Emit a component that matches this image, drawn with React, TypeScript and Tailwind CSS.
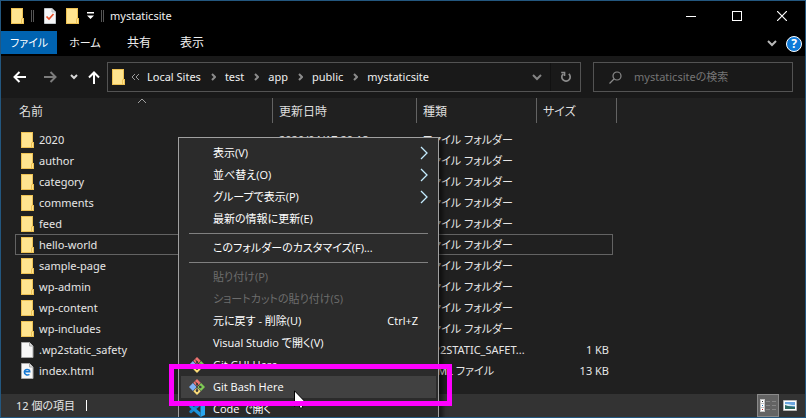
import type { ReactNode } from 'react';

type Kind = 'folder' | 'file' | 'html';

interface Entry {
  name: string;
  kind: Kind;
  type: string;
  size?: string;
  date?: string;
  focused?: boolean;
}

const FOLDER = 'ファイル フォルダー';

const entries: Entry[] = [
  { name: '2020', kind: 'folder', type: FOLDER, date: '2020/04/17 20:18' },
  { name: 'author', kind: 'folder', type: FOLDER },
  { name: 'category', kind: 'folder', type: FOLDER },
  { name: 'comments', kind: 'folder', type: FOLDER },
  { name: 'feed', kind: 'folder', type: FOLDER },
  { name: 'hello-world', kind: 'folder', type: FOLDER, focused: true },
  { name: 'sample-page', kind: 'folder', type: FOLDER },
  { name: 'wp-admin', kind: 'folder', type: FOLDER },
  { name: 'wp-content', kind: 'folder', type: FOLDER },
  { name: 'wp-includes', kind: 'folder', type: FOLDER },
  { name: '.wp2static_safety', kind: 'file', type: 'WP2STATIC_SAFET...', size: '1 KB' },
  { name: 'index.html', kind: 'html', type: 'HTML ファイル', size: '13 KB' },
];

function FolderIcon() {
  return (
    <svg width="13" height="16" viewBox="0 0 13 16" className="shrink-0" aria-hidden="true">
      <path d="M0 0h12v10h1v6H0z" fill="#eec254" />
      <path d="M1 1h10v9.500h-1V15H1z" fill="#ffe48f" />
      <path d="M11 11h1v4h-1z" fill="#ffe48f" />
    </svg>
  );
}

function FileIcon({ kind }: { kind: Kind }) {
  if (kind === 'folder') return <FolderIcon />;
  return (
    <svg width="13" height="16" viewBox="0 0 13 16" className="shrink-0" aria-hidden="true">
      <path d="M.5.5h8l3.500 3.500v11.500H.5z" fill="#f7f7f7" stroke="#a9a9a9" />
      <path d="M8.500.5v3.500H12" fill="#ddd" stroke="#a9a9a9" />
      {kind === 'html' && (
        <path d="M3.800 8.800h4.900c0-3.300-5.200-3.100-5.300.3-.1 3 3.200 3.500 5 2.300" fill="none" stroke="#1679d3" strokeWidth="1.600" />
      )}
    </svg>
  );
}

function CheckPageIcon() {
  return (
    <svg width="12" height="16" viewBox="0 0 12 16" aria-hidden="true">
      <path d="M.5.5h7.500l3.500 3.500v11.500H.5z" fill="#f4f6f8" stroke="#c3c8cc" />
      <path d="M8 .5v3.500h3.500" fill="#dfe3e6" stroke="#b9bfc4" />
      <path d="M2.500 8.500 5 11l4.500-5" fill="none" stroke="#e8502a" strokeWidth="1.700" />
    </svg>
  );
}

function GitIcon() {
  return (
    <svg width="16" height="16" viewBox="0 0 16 16" aria-hidden="true">
      <path d="M8 0l3.700 3.700L8 7.400 4.300 3.700z" fill="#ee7370" />
      <path d="M3.900 4.100 7.600 8 3.900 11.900 0 8z" fill="#7fb2f5" />
      <path d="M12.100 4.100 16 8l-3.900 3.900L8.300 8z" fill="#7fca55" />
      <path d="M8 8.600l3.700 3.700L8 16l-3.700-3.700z" fill="#fbdc78" />
      <path d="M6.200 2.500 8 4.500v8M8 5l3.500 3.200" fill="none" stroke="#3a3a3a" strokeWidth="1" />
      <circle cx="8" cy="5" r="1.100" fill="#3a3a3a" />
      <circle cx="8" cy="11.600" r="1.300" fill="#3a3a3a" />
      <circle cx="11.300" cy="8" r="1.300" fill="#3a3a3a" />
    </svg>
  );
}

function CodeIcon() {
  return (
    <svg width="16" height="16" viewBox="0 0 16 16" aria-hidden="true">
      <path d="M11.500 0 16 2v12l-4.500 2z" fill="#2aa6ee" />
      <path d="M11.500 0v4.500L2 12.500.3 11.200v-1.200z" fill="#1487cf" />
      <path d="M11.500 16v-4.500L2 3.500.3 4.800V6z" fill="#1a93dc" />
    </svg>
  );
}

function Chevron({ className, d, w = 10, h = 10, stroke = 2 }: { className: string; d: string; w?: number; h?: number; stroke?: number }) {
  return (
    <svg width={w} height={h} viewBox={`0 0 ${w} ${h}`} className={className} fill="none" stroke="currentColor" strokeWidth={stroke} aria-hidden="true">
      <path d={d} />
    </svg>
  );
}

function MenuItem({ label, icon, keys, sub, disabled, active }: { label: string; icon?: ReactNode; keys?: string; sub?: boolean; disabled?: boolean; active?: boolean }) {
  return (
    <button
      type="button"
      role="menuitem"
      disabled={disabled}
      className={`mx-[2px] flex h-[22px] shrink-0 items-center pr-2 pl-2 text-left ${active ? 'bg-[#414141]' : ''} ${disabled ? 'text-[#6d6d6d]' : 'text-white'}`}
    >
      <span className="flex w-6 shrink-0">{icon}</span>
      <span className="flex-1 whitespace-nowrap">{label}</span>
      {keys && <span className="pr-[10px]">{keys}</span>}
      {sub && <Chevron className="text-[#c4ecff]" d="M1 1l6 6-6 6" w={8} h={14} stroke={1.3} />}
    </button>
  );
}

function Separator() {
  return (
    <div role="separator" className="flex h-[7px] shrink-0 items-center px-[10px]">
      <div className="h-px flex-1 bg-[#808080]" />
    </div>
  );
}

function ContextMenu() {
  return (
    <div role="menu" className="absolute top-[137px] left-[178px] flex w-[261px] flex-col border border-[#a0a0a0] bg-[#2b2b2b] pt-1 pb-1 font-['Open_Sans','Noto_Sans_CJK_JP',sans-serif] shadow-[4px_4px_4px_rgba(0,0,0,0.5)]">
      <MenuItem label="表示(V)" sub />
      <MenuItem label="並べ替え(O)" sub />
      <MenuItem label="グループで表示(P)" sub />
      <MenuItem label="最新の情報に更新(E)" />
      <Separator />
      <MenuItem label="このフォルダーのカスタマイズ(F)..." />
      <Separator />
      <MenuItem label="貼り付け(P)" disabled />
      <MenuItem label="ショートカットの貼り付け(S)" disabled />
      <MenuItem label="元に戻す - 削除(U)" keys="Ctrl+Z" />
      <MenuItem label="Visual Studio で開く(V)" />
      <MenuItem label="Git GUI Here" icon={<GitIcon />} />
      <MenuItem label="Git Bash Here" icon={<GitIcon />} active />
      <MenuItem label="Code で開く" icon={<CodeIcon />} />
    </div>
  );
}

function TitleBar() {
  return (
    <header className="flex h-[30px] shrink-0 items-center bg-black pl-[10px]">
      <FolderIcon />
      <span className="ml-[7px] h-3 w-[3px] border-x border-[#555]" />
      <button type="button" aria-label="プロパティ" className="ml-[10px]"><CheckPageIcon /></button>
      <button type="button" aria-label="新しいフォルダー" className="ml-[10px]"><FolderIcon /></button>
      <button type="button" aria-label="カスタマイズ" className="ml-2">
        <svg width="7" height="8" viewBox="0 0 7 8" aria-hidden="true">
          <path d="M0 0h7v1.500H0zM0 3.500h7L3.500 7z" fill="#fff" />
        </svg>
      </button>
      <span className="ml-[7px] h-3 w-[3px] border-x border-[#555]" />
      <h1 className="ml-[6px] flex-1 text-[#f0f0f0]">mystaticsite</h1>
      <button type="button" aria-label="最小化" className="flex w-[46px] justify-center">
        <span className="h-px w-[10px] bg-white" />
      </button>
      <button type="button" aria-label="最大化" className="flex w-[45px] justify-center">
        <span className="size-[10px] border border-white" />
      </button>
      <button type="button" aria-label="閉じる" className="flex w-[46px] justify-center">
        <svg width="10" height="10" viewBox="0 0 10 10" stroke="#fff" strokeWidth="1.200" aria-hidden="true">
          <path d="M0 0l10 10M10 0L0 10" />
        </svg>
      </button>
    </header>
  );
}

function Ribbon() {
  return (
    <nav className="flex h-[25px] shrink-0 items-start bg-black text-[12px]">
      <button type="button" className="h-[23px] w-14 bg-[#0063b1] text-[11px] text-white">ファイル</button>
      <button type="button" className="h-[23px] w-14 text-[11px] text-[#f0f0f0]">ホーム</button>
      <button type="button" className="h-[23px] w-[52px] text-[#f0f0f0]">共有</button>
      <button type="button" className="h-[23px] w-[54px] text-[#f0f0f0]">表示</button>
      <span className="flex-1" />
      <button type="button" aria-label="リボンの展開" className="flex h-6 w-5 items-center justify-center">
        <Chevron className="text-[#b8b8b8]" d="M1 1l4 4 4-4" h={7} />
      </button>
      <button type="button" aria-label="ヘルプ" className="mr-[3px] ml-1 flex size-4 items-center justify-center self-center rounded-full border border-white bg-[#0f7ad8] leading-none font-bold text-white">
        ?
      </button>
    </nav>
  );
}

const crumbs = ['Local Sites', 'test', 'app', 'public', 'mystaticsite'];

function AddressBar() {
  return (
    <div className="flex h-[42px] shrink-0 items-center bg-[#191919] pr-3 pl-3">
      <button type="button" aria-label="戻る">
        <Chevron className="text-white" d="M6.500 1 1.500 6l5 5M1.500 6H13" w={13} h={12} />
      </button>
      <button type="button" aria-label="進む" className="ml-[18px]">
        <Chevron className="text-[#7c7c7c]" d="M6.500 1l5 5-5 5M11.500 6H0" w={13} h={12} />
      </button>
      <button type="button" aria-label="履歴" className="ml-[13px]">
        <Chevron className="text-[#d8d8d8]" d="M1 1l3 3 3-3" w={8} h={6} />
      </button>
      <button type="button" aria-label="上へ" className="ml-[10px]">
        <Chevron className="text-white" d="M1 6.500l5-5 5 5M6 1.500V13" w={12} h={13} />
      </button>
      <div className="ml-[7px] flex h-[30px] min-w-0 flex-1 items-center border border-[#535353] pl-1 text-[#f0f0f0]">
        <FolderIcon />
        <Chevron className="ml-[6px] text-[#9a9a9a]" d="M4 1L1 4l3 3M8 1L5 4l3 3" w={9} h={8} stroke={1} />
        {crumbs.map((c, i) => (
          <span key={c} className={`flex items-center ${i === 0 ? 'ml-[7px]' : 'ml-[10px]'}`}>
            {i > 0 && <Chevron className="mr-[9px] text-[#8c8c8c]" d="M1 1l3 3-3 3" w={5} h={8} stroke={2} />}
            <button type="button" className="whitespace-nowrap">{c}</button>
          </span>
        ))}
        <span className="flex-1" />
        <button type="button" aria-label="以前の場所" className="mr-2">
          <Chevron className="text-[#858585]" d="M1 1l4 4 4-4" h={7} />
        </button>
        <button type="button" aria-label="更新" className="flex h-[28px] w-[30px] items-center justify-center border-l border-[#111]">
          <svg width="12" height="12" viewBox="0 0 12 12" fill="none" stroke="#8c8c8c" strokeWidth="1.700" aria-hidden="true">
            <path d="M8.800 2.800a4.200 4.200 0 1 1-5.800.2M1.200 1.500h3.300V5" />
          </svg>
        </button>
      </div>
      <label className="ml-3 flex h-[30px] w-[200px] items-center border border-[#535353] pl-[15px]">
        <svg width="13" height="13" viewBox="0 0 13 13" fill="none" stroke="#8a8a8a" strokeWidth="1.200" className="shrink-0" aria-hidden="true">
          <circle cx="8" cy="5" r="4" />
          <path d="M5 8L.5 12.500" />
        </svg>
        <input type="search" aria-label="検索" placeholder="mystaticsiteの検索" className="ml-3 w-full min-w-0 bg-transparent placeholder:text-[#757575]" />
      </label>
    </div>
  );
}

function HeaderCell({ label, last }: { label: string; last?: boolean }) {
  return (
    <th scope="col" className="p-0 align-top font-normal">
      <div className={`flex h-[25px] items-center border-r border-[#636363] pt-[2px] pl-[6px] text-left text-[#dedede] ${last ? '-mr-1' : ''}`}>{label}</div>
    </th>
  );
}

function FileList() {
  return (
    <main className="min-h-0 flex-1 overflow-hidden bg-[#202020] pl-[14px]">
      <table className="w-[598px] table-fixed border-collapse text-[#e6e6e6]">
        <colgroup>
          <col className="w-[258px]" />
          <col className="w-[144px]" />
          <col className="w-[120px]" />
          <col className="w-[76px]" />
        </colgroup>
        <thead className="text-[12px]">
          <tr className="h-[31px]">
            <th scope="col" aria-sort="ascending" className="p-0 align-top font-normal">
              <div className="flex h-[25px] items-center border-r border-[#636363] pl-1 text-[#dedede]">
                <span className="pt-[2px]">名前</span>
                <Chevron className="ml-[94px] self-start text-[#a0a0a0]" d="M1 5l4-4 4 4" h={6} stroke={1} />
              </div>
            </th>
            <HeaderCell label="更新日時" />
            <HeaderCell label="種類" />
            <HeaderCell label="サイズ" last />
          </tr>
        </thead>
        <tbody>
          {entries.map((e) => (
            <tr key={e.name} className={`h-[21px] ${e.focused ? 'outline outline-1 -outline-offset-1 outline-[#636363]' : ''}`}>
              <td className="p-0">
                <span className="flex items-center gap-[5px] pl-[6px]">
                  <FileIcon kind={e.kind} />
                  {e.name}
                </span>
              </td>
              <td className="p-0 pl-[6px]">{e.date}</td>
              <td className="p-0 pl-[6px] whitespace-nowrap">{e.type}</td>
              <td className="p-0 pr-1 text-right">{e.size}</td>
            </tr>
          ))}
        </tbody>
      </table>
    </main>
  );
}

function StatusBar() {
  return (
    <footer className="flex h-[23px] shrink-0 items-center bg-[#333] pr-2 pl-[15px] text-[#e6e6e6]">
      <span>12 個の項目</span>
      <span className="ml-[11px] h-[11px] w-px bg-white" />
      <span className="flex-1" />
      <button type="button" aria-label="詳細" className="flex h-[23px] w-[22px] items-center justify-center border border-[#8a8a8a] bg-[#636363]">
        <svg width="17" height="13" viewBox="0 0 17 13" aria-hidden="true">
          <path d="M0 0h5v13H0z" fill="#c4c4c4" />
          <path d="M1 1h3v3H1zM1 5h3v3H1zM1 9h3v3H1z" fill="#fff" />
          <path d="M2 2h1v1H2z" fill="#333" />
          <path d="M2 6h1v1H2z" fill="#1f6fb8" />
          <path d="M2 10h1v1H2z" fill="#c02020" />
          <path d="M6 2h4v1H6zM12 2h4v1h-4zM6 6h4v1H6zM12 6h4v1h-4zM6 10h4v1H6zM12 10h4v1h-4z" fill="#858585" />
        </svg>
      </button>
      <button type="button" aria-label="大アイコン" className="ml-1">
        <svg width="14" height="11" viewBox="0 0 14 11" aria-hidden="true">
          <path d="M.5.5h13v10H.5z" fill="#fff" stroke="#b5b5b5" />
          <path d="M2 2h10v7H2z" fill="#6aa5e0" />
          <path d="M2 4h3l4 1h3v1H2z" fill="#d9ecf6" />
          <path d="M2 5l3 1 7 1v2H2z" fill="#2d6a63" />
        </svg>
      </button>
    </footer>
  );
}

export default function App() {
  return (
    <div lang="ja" className="relative flex h-screen flex-col overflow-hidden border border-[#23577f] bg-[#202020] font-['Noto_Sans','Noto_Sans_CJK_JP',sans-serif] text-[11px] leading-4 [font-feature-settings:'palt']">
      <TitleBar />
      <Ribbon />
      <AddressBar />
      <FileList />
      <StatusBar />
      <div className="pointer-events-none absolute inset-0 -m-px overflow-hidden">
        <ContextMenu />
        <svg width="12" height="19" viewBox="0 0 12 19" className="absolute top-[390px] left-[294px]" aria-hidden="true">
          <path d="M.5.8v15.700l3.600-3.400 2.300 5.300 2.400-1-2.300-5.200h5z" fill="#fff" stroke="#000" />
        </svg>
        <div className="absolute top-[364px] left-[169px] h-[42px] w-[283px] border-5 border-[#ff00ff]" />
      </div>
    </div>
  );
}
